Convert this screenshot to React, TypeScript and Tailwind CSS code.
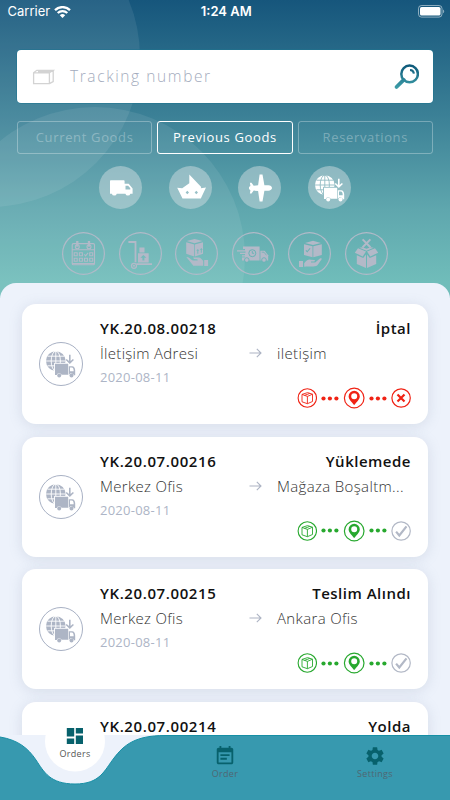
import React, { useId } from 'react';

type Status = 'cancelled' | 'active';

interface Order {
  id: string;
  state: string;
  from: string;
  to: string;
  date: string;
  status: Status;
}

const orders: Order[] = [
  { id: 'YK.20.08.00218', state: 'İptal', from: 'İletişim Adresi', to: 'iletişim', date: '2020-08-11', status: 'cancelled' },
  { id: 'YK.20.07.00216', state: 'Yüklemede', from: 'Merkez Ofis', to: 'Mağaza Boşaltm...', date: '2020-08-11', status: 'active' },
  { id: 'YK.20.07.00215', state: 'Teslim Alındı', from: 'Merkez Ofis', to: 'Ankara Ofis', date: '2020-08-11', status: 'active' },
];

const tabs = ['Current Goods', 'Previous Goods', 'Reservations'];

// Transport icons, all drawn on a 43x43 canvas
const TruckIcon = () => (
  <svg viewBox="0 0 43 43" className="size-[43px]" fill="currentColor">
    <path fillRule="evenodd" d="M11.7 14.3h13.1c.5 0 .8.3.8.8v2.6h4.1l3.9 4.8v5.2h-2.2a2.6 2.6 0 0 1-5 0h-8.6a2.6 2.6 0 0 1-5 0H11V15c0-.4.3-.7.7-.7zM26.5 19.7v3.9h4.8v-1.3l-2.2-2.6z" />
  </svg>
);

const ShipIcon = () => (
  <svg viewBox="0 0 43 43" className="size-[43px]" fill="currentColor">
    <path fillRule="evenodd" d="M20.3 8.6 32.2 21l-.4 1.2 5.2-.6-5.2 11H13.5L8.2 21.7l5 .5 7.1-5zM18.3 24.8l-1.7 1.7 1.7 1.7 1.7-1.7zM27.3 24.8l-1.7 1.7 1.7 1.7 1.7-1.7z" />
  </svg>
);

const PlaneIcon = () => (
  <svg viewBox="0 0 43 43" className="size-[43px]" fill="currentColor">
    <path d="M34 22c0 1.4-1.6 2.7-3.6 2.7h-4l-1.9 10.9h-2.9l-1.5-10.5-4.4-.5-2.2 3H11.9l.5-3.3L11 23v-2l1.4-1-.5-3.3h1.6l2.2 3 4.4-.5 1.5-10.8h2.9l1.9 10.9h4c2 0 3.6 1.3 3.6 2.7z" />
  </svg>
);

const GlobeTruckIcon = ({ className }: { className?: string }) => {
  const id = useId();
  return (
    <svg viewBox="0 0 43 43" className={`size-[43px] ${className ?? ''}`} fill="currentColor">
      <mask id={id} maskUnits="userSpaceOnUse" x="0" y="0" width="43" height="43">
        <circle cx="16.8" cy="19" r="9.8" fill="#fff" />
        <g fill="none" stroke="#000" strokeWidth="0.9">
          <ellipse cx="16.8" cy="19" rx="4.6" ry="9.9" />
          <path d="M16.8 9v20M7 19h20M8.5 14.2h17M8.5 23.8h17" />
        </g>
        <path d="M15.1 20.9H38v14H15.1z" fill="#000" />
      </mask>
      <path d="M6 8h22v22H6z" mask={`url(#${id})`} />
      <path d="M16 21.8h13.2v11h-6.6a2.6 2.6 0 0 0-4.9.3H16z" />
      <path fillRule="evenodd" d="M29.8 24.2h3.4c1.8 0 3 1.8 3 4.2v4.8h-1.3a2.6 2.6 0 0 0-4.8-.4h-.3zM31 25.5v3.7h3.7c0-2.2-.6-3.7-1.9-3.7z" />
      <circle cx="20.2" cy="33.6" r="2" />
      <circle cx="32.5" cy="33.6" r="2" />
      <path d="M30 12.8v6.3l-2.3-2.2-1 1 4.1 4 4.1-4-1-1-2.3 2.2v-6.3z" />
    </svg>
  );
};

// Order stage icons
const CalendarIcon = () => (
  <svg viewBox="0 0 43 43" className="size-[43px]" fill="none" stroke="currentColor" strokeWidth="1.1">
    <rect x="10.2" y="11.6" width="22.3" height="21.2" rx="1.3" />
    <path d="M10 17.8h22.5M10 31.6h22.5" />
    <circle cx="15.3" cy="14.8" r="2" />
    <path d="M14.7 14.8V9.6h1.2v5.2" />
    <circle cx="27" cy="14.8" r="2" />
    <path d="M26.4 14.8V9.6h1.2v5.2" />
    <path d="M12.2 20.8h3v3h-3zM17.4 20.8h3v3h-3zM27.7 20.8h3v3h-3zM12.2 26.3h3v3h-3zM17.4 26.3h3v3h-3zM22.5 26.3h3v3h-3zM27.7 26.3h3v3h-3zM22.3 22.4l1.3 1.4 2.5-3" />
  </svg>
);

const TrolleyIcon = () => (
  <svg viewBox="0 0 43 43" className="size-[43px]" fill="currentColor">
    <path d="M9.4 9.1h8v21.2h-1.8V10.9H9.4z" />
    <path d="M17.4 31.2h15.6v1.7H17.6zM20.4 15.4h5.1v5h-5.1z" />
    <path fillRule="evenodd" d="M19 21.2h10.7v9.2H19zM24.4 23l-3 2.8h2v2.8h2v-2.8h2z" />
    <circle cx="15" cy="33.8" r="2.5" fill="none" stroke="currentColor" strokeWidth="1.3" />
    <circle cx="15" cy="33.8" r="1" />
  </svg>
);

const BoxGiveIcon = () => (
  <svg viewBox="0 0 43 43" className="size-[43px]" fill="currentColor">
    <path d="M11.8 9.1 19.6 7l8 2.1-8 2.2zM11.2 10.3l8 2.1v12.2l-8-2.8z" />
    <path fillRule="evenodd" d="M19.9 12.4 28 10.3v11.5l-8.1 2.8zM22.8 16.9l-1.5 1.9h1v3h1v-3h1zM26.3 15.9l-1.5 1.9h1v3h1v-3h1z" />
    <path d="M11.3 24.9c2.4 0 3.3 1.3 4.8 2.5l1.8 1.1h4.5c.6 0 .5-1.1-.5-1.2l-3-.4-.7-1.4h5.8c2.1 0 3 2.6 4.2 3.3v4.9H18.4zM29.2 27.9h3.9v6h-3.9z" />
  </svg>
);

const FastTruckIcon = () => (
  <svg viewBox="0 0 43 43" className="size-[43px]" fill="currentColor">
    <path d="M11 14.4h16.6v14H10v-3h3v-1h-3v-1.2h3V22H8v-1.3h5.4v-1.2H5v-1.2h8v-1.2h-2z" />
    <path d="M28.4 18.8h4.2l3.6 4.5v5.1h-7.8z" />
    <path d="M29.7 20.2h2.3l2.4 3.1" fill="none" stroke="#68b3b5" strokeWidth=".7" />
    <circle cx="20.3" cy="21.2" r="3.5" fill="none" stroke="#68b3b5" strokeWidth="1" />
    <path d="M20.3 19v2.3h1.8" fill="none" stroke="#68b3b5" strokeWidth=".9" />
    <g stroke="#68b3b5" strokeWidth=".9">
      <circle cx="14.8" cy="28" r="2.3" />
      <circle cx="32" cy="28" r="2.3" />
    </g>
  </svg>
);

const BoxReceiveIcon = () => (
  <svg viewBox="0 0 43 43" className="size-[43px]" fill="currentColor">
    <path d="m17 11 8-2.2 8 2.2-8 2.1z" />
    <path fillRule="evenodd" d="m16 12.2 8.5 2.1v10.9L16 22.9zM21.7 16l-2.5 3-.9-.9-.8.6 1.8 1.8 3.2-3.9z" />
    <path d="m25.3 14.3 8.5-2.1v10.7l-8.5 2.3zM11 29h4v6h-4z" />
    <path d="M16.2 31.3c2.4-3.4 4.6-4 6.4-3.6l3.6.4c1.2.2.9 1.4-.2 1.5h-3v.8h4.2l4.7-3.9c1-.7 2.2-.2 1.6.9-2 2.7-3.7 6-5.3 6.5-3.5 1.1-7 .4-12 .8z" />
  </svg>
);

const BoxCancelIcon = () => (
  <svg viewBox="0 0 43 43" className="size-[43px]" fill="currentColor">
    <path d="m17.6 7.4 7.8 7.8M25.4 7.4l-7.8 7.8" fill="none" stroke="currentColor" strokeWidth="2" />
    <path d="M13 16.2 21 19.6l-3.3 4.8-7.9-3.6zM30 16.2l-8 3.4 3.3 4.8 7.9-3.6z" />
    <path d="M11.8 23.3l6.4 2.7 2.8-3.4v13.5l-9.2-4zM31.2 23.3 24.8 26 22 22.6v13.5l9.2-4z" />
    <path d="m14.3 15.8 3-.6 4.2 1.5 4.2-1.5 3 .6-7.2 3z" />
  </svg>
);

const transportIcons = [TruckIcon, ShipIcon, PlaneIcon, GlobeTruckIcon];
const stageIcons = [CalendarIcon, TrolleyIcon, BoxGiveIcon, FastTruckIcon, BoxReceiveIcon, BoxCancelIcon];

function StatusBar() {
  return (
    <div className="grid h-[23px] grid-cols-3 items-center pl-[7.5px] pr-[5px] font-[Inter,sans-serif] text-[13px] text-white">
      <div className="flex items-center gap-[4px]">
        <span>Carrier</span>
        <svg width="17" height="12" viewBox="0 0 17 12" fill="none" stroke="currentColor">
          <path d="M1 4.1a10.8 10.8 0 0 1 15 0" strokeWidth="2.3" />
          <path d="M3.7 7a6.9 6.9 0 0 1 9.6 0" strokeWidth="2.2" />
          <path d="M8.5 12 5.8 9.2a3.9 3.9 0 0 1 5.4 0z" fill="currentColor" stroke="none" />
        </svg>
      </div>
      <span className="text-center font-semibold">1:24 AM</span>
      <svg className="justify-self-end" width="27" height="13" viewBox="0 0 27 13">
        <rect x=".5" y=".5" width="23.5" height="11.6" rx="3" fill="none" stroke="#fff" strokeOpacity=".5" />
        <rect x="2" y="2" width="20.5" height="8.6" rx="1.6" fill="#fff" />
        <path d="M25.2 4.5v3.8c1.3-.6 1.3-3.2 0-3.8z" fill="#fff" fillOpacity=".6" />
      </svg>
    </div>
  );
}

function SearchBox() {
  return (
    <div className="mx-[17px] mt-[27px] flex h-[53px] items-center rounded-[4px] bg-white pl-[15px] pr-[14px] shadow-[0_0_0_0.5px_#1d7490]">
      <svg width="23" height="16" viewBox="0 0 23 16" fill="none" stroke="#d3d3d3" strokeWidth="1.3">
        <path d="M1.6 3.8h15.8v10.8H1.6zM1.6 3.8 4.8 1.3h16.4l-3.8 2.5M21.2 1.3v11.2l-3.8 2.1M6 2.5h12.6" />
      </svg>
      <span className="ml-[15px] flex-1 text-[15.5px] font-[350] tracking-[1.6px] text-[#a3abbd]">Tracking number</span>
      <svg width="26" height="26" viewBox="0 0 26 26" fill="none">
        <defs>
          <linearGradient id="lens" gradientUnits="userSpaceOnUse" x1="13" y1="1" x2="13" y2="25">
            <stop stopColor="#0d5879" />
            <stop offset="1" stopColor="#3fa0aa" />
          </linearGradient>
        </defs>
        <circle cx="16.6" cy="9.9" r="8.3" stroke="url(#lens)" strokeWidth="2.5" />
        <path d="M10.7 15.9 3.5 23" stroke="url(#lens)" strokeWidth="3.8" strokeLinecap="round" />
        <path d="M17 6c2.1.1 3.7 1.6 3.9 3.7" stroke="url(#lens)" strokeWidth="2.1" />
      </svg>
    </div>
  );
}

function Header() {
  return (
    <header className="relative h-[298px] overflow-hidden bg-[linear-gradient(180deg,#16567c_0px,#3b8096_115px,#5fa7ae_210px,#70bdba_282px)]">
      {/* decorative circles behind the controls */}
      <div className="absolute -left-[160px] -top-[93px] size-[300px] rounded-full bg-white/[0.08]" />
      <div className="absolute -left-[55px] top-[107px] size-[300px] rounded-full bg-white/[0.08]" />
      <div className="relative">
        <StatusBar />
        <SearchBox />
        <div className="mx-[17px] mt-[18px] grid grid-cols-3 gap-[5px]">
          {tabs.map((tab) => (
            <div
              key={tab}
              className={`flex h-[33px] items-center justify-center rounded-[3px] border pt-px text-[13px] tracking-[0.65px] ${
                tab === 'Previous Goods' ? 'border-white text-white' : 'border-white/30 text-white/30'
              }`}
            >
              {tab}
            </div>
          ))}
        </div>
        <div className="mt-3 flex justify-center gap-[26.5px]">
          {transportIcons.map((Icon, i) => (
            <div key={i} className="size-[43px] rounded-full bg-[#cddce0]/50 text-white">
              <Icon />
            </div>
          ))}
        </div>
        <div className="mt-[23px] flex justify-center gap-[13.5px] text-[#b3b9c8]">
          {stageIcons.map((Icon, i) => (
            <div key={i} className="size-[43px] rounded-full shadow-[inset_0_0_0_1.2px_#b0bac8]">
              <Icon />
            </div>
          ))}
        </div>
      </div>
    </header>
  );
}

const Dots = () => (
  <svg className="ml-[4px]" width="18" height="5" viewBox="0 0 18 5" fill="currentColor">
    <circle cx="2.5" cy="2.5" r="2.1" />
    <circle cx="8.9" cy="2.5" r="2.1" />
    <circle cx="15.4" cy="2.5" r="2.1" />
  </svg>
);

function Progress({ status }: { status: Status }) {
  const cancelled = status === 'cancelled';
  return (
    <div className={`-mt-px flex h-[22px] items-center justify-end ${cancelled ? 'text-[#f02315]' : 'text-[#27a82e]'}`}>
      <svg width="20" height="20" viewBox="0 0 20 20" fill="none" stroke="currentColor">
        <circle cx="10.3" cy="10" r="9.2" strokeWidth="1.1" />
        <path d="m5 6.4 5.6-1.8 4.9 1.6-5.1 2.2zM5 6.4v7.4l5.4 1.9V8.4M15.5 6.2v7.3l-5.1 2.2M7.5 7.4l5.3-2" strokeWidth=".9" />
      </svg>
      <Dots />
      <svg className="ml-[4px]" width="22" height="22" viewBox="0 0 22 22">
        <circle cx="11.2" cy="11" r="9.8" fill="none" stroke="currentColor" strokeWidth="1.2" />
        <path fillRule="evenodd" fill="currentColor" d="M11.2 3.8a5.6 5.6 0 0 1 5.6 5.6c0 3-3.6 6-5.6 8.7-2-2.7-5.6-5.7-5.6-8.7a5.6 5.6 0 0 1 5.6-5.6zM11.2 6.2a3 3 0 1 0 0 6 3 3 0 0 0 0-6z" />
      </svg>
      <Dots />
      <svg className={`ml-[4px] ${cancelled ? '' : 'text-[#b2b8c6]'}`} width="20" height="20" viewBox="0 0 20 20" fill="none" stroke="currentColor">
        <circle cx="10.1" cy="10" r="9.2" strokeWidth="1.2" />
        {cancelled ? (
          <path d="m6.5 6.5 7 7M13.5 6.5l-7 7" strokeWidth="2.2" />
        ) : (
          <path d="m5.1 10.6 3.2 3.8 7.2-9" strokeWidth="2.2" />
        )}
      </svg>
    </div>
  );
}

const cardClass = 'flex shrink-0 bg-white px-[17px] shadow-[0_2px_14px_rgba(120,135,160,0.2)]';

function CardTitle({ id, state }: { id: string; state: string }) {
  return (
    <div className="flex justify-between text-[15px] font-[550] leading-6 text-[#111]">
      <span className="tracking-[0.6px]">{id}</span>
      <span className="tracking-[0.5px]">{state}</span>
    </div>
  );
}

function OrderCard({ order }: { order: Order }) {
  return (
    <article className={`${cardClass} h-[120px] rounded-[14px]`}>
      <div className="mt-[38px] size-[44px] shrink-0 rounded-full border border-[#a8b1c4] text-[#adb5c5]">
        <GlobeTruckIcon className="-ml-px -mt-px" />
      </div>
      <div className="ml-[17px] min-w-0 flex-1 pt-[12px]">
        <CardTitle id={order.id} state={order.state} />
        <div className="flex items-center whitespace-nowrap text-[15px] font-light leading-[26px] text-[#333]">
          <span className="w-[149px] tracking-[0.3px]">{order.from}</span>
          <svg width="13" height="10" viewBox="0 0 13 10" fill="none" stroke="#adb4c4" strokeWidth="1.1">
            <path d="M.5 5h11M7.8.9 12 5 7.8 9.1" />
          </svg>
          <span className="ml-[15px] tracking-[0.35px]">{order.to}</span>
        </div>
        <div className="text-[13px] leading-[22px] tracking-[0.25px] text-[#adb5c6]">{order.date}</div>
        <Progress status={order.status} />
      </div>
    </article>
  );
}

function BottomNav() {
  return (
    <nav className="absolute inset-x-0 bottom-0 h-[65px]">
      {/* bar with the notch under the selected item */}
      <svg className="absolute inset-0 overflow-visible" width="450" height="65" viewBox="0 0 450 65">
        <path d="M0 0h165v65H0z" fill="#edf2fb" />
        <circle cx="75" cy="6.5" r="30" fill="#fff" />
        <path d="M0 2C18 5 28 13 36 25S50 49 75 49S104 36 114 23S135 .5 165 .5H450V65H0z" fill="#3799af" />
        <path d="M0 2C18 5 28 13 36 25S50 49 75 49S104 36 114 23S135 .5 165 .5H450" fill="none" stroke="#168fa5" />
      </svg>
      <div className="relative grid grid-cols-3 text-[9px] tracking-[0.3px] text-[#4f6772]">
        <div className="-mt-[11px] flex flex-col items-center text-[#555]">
          <svg width="24" height="24" viewBox="0 0 24 24" fill="#07616c">
            <path d="M3.8 12.5h7.4V4H3.8zM3.8 20h7.4v-5.4H3.8zM12.8 20H20v-8.5h-7.2zM12.8 4v5.4H20V4z" />
          </svg>
          <span className="leading-[12px]">Orders</span>
        </div>
        <div className="mt-[10px] flex flex-col items-center">
          <svg width="22" height="22" viewBox="0 0 24 24" fill="#07616c">
            <path d="M17 10H7v2h10v-2zm2-7h-1V1h-2v2H8V1H6v2H5c-1.11 0-1.99.9-1.99 2L3 19c0 1.1.89 2 2 2h14c1.1 0 2-.9 2-2V5c0-1.1-.9-2-2-2zm0 16H5V8h14v11zm-5-5H7v2h7v-2z" />
          </svg>
          <span className="leading-[13px]">Order</span>
        </div>
        <div className="mt-[10px] flex flex-col items-center">
          <svg width="22" height="22" viewBox="0 0 24 24" fill="#07616c">
            <path d="M19.14 12.94c.04-.3.06-.61.06-.94 0-.32-.02-.64-.07-.94l2.03-1.58a.49.49 0 0 0 .12-.61l-1.92-3.32a.488.488 0 0 0-.59-.22l-2.39.96c-.5-.38-1.03-.7-1.62-.94l-.36-2.54a.484.484 0 0 0-.48-.41h-3.84c-.24 0-.43.17-.47.41l-.36 2.54c-.59.24-1.13.57-1.62.94l-2.39-.96c-.22-.08-.47 0-.59.22L2.74 8.87c-.12.21-.08.47.12.61l2.03 1.58c-.05.3-.09.63-.09.94s.02.64.07.94l-2.03 1.58a.49.49 0 0 0-.12.61l1.92 3.32c.12.22.37.29.59.22l2.39-.96c.5.38 1.03.7 1.62.94l.36 2.54c.05.24.24.41.48.41h3.84c.24 0 .44-.17.47-.41l.36-2.54c.59-.24 1.13-.56 1.62-.94l2.39.96c.22.08.47 0 .59-.22l1.92-3.32c.12-.22.07-.47-.12-.61l-2.01-1.58zM12 15.6c-1.98 0-3.6-1.62-3.6-3.6s1.62-3.6 3.6-3.6 3.6 1.62 3.6 3.6-1.62 3.6-3.6 3.6z" />
          </svg>
          <span className="leading-[13px]">Settings</span>
        </div>
      </div>
    </nav>
  );
}

export default function App() {
  return (
    <div className="relative h-[800px] w-[450px] overflow-hidden font-['Open_Sans',sans-serif]">
      <Header />
      <main className="relative -mt-[15px] flex h-[517px] flex-col gap-[12.7px] overflow-hidden rounded-t-[16px] bg-[#edf2fb] px-[22px] pt-[21px]">
        {orders.map((order) => (
          <OrderCard key={order.id} order={order} />
        ))}
        {/* last row runs under the navigation bar */}
        <article className={`${cardClass} h-[80px] rounded-t-[14px]`}>
          <div className="ml-[61px] flex-1 pt-[12px]">
            <CardTitle id="YK.20.07.00214" state="Yolda" />
          </div>
        </article>
      </main>
      <BottomNav />
    </div>
  );
}
